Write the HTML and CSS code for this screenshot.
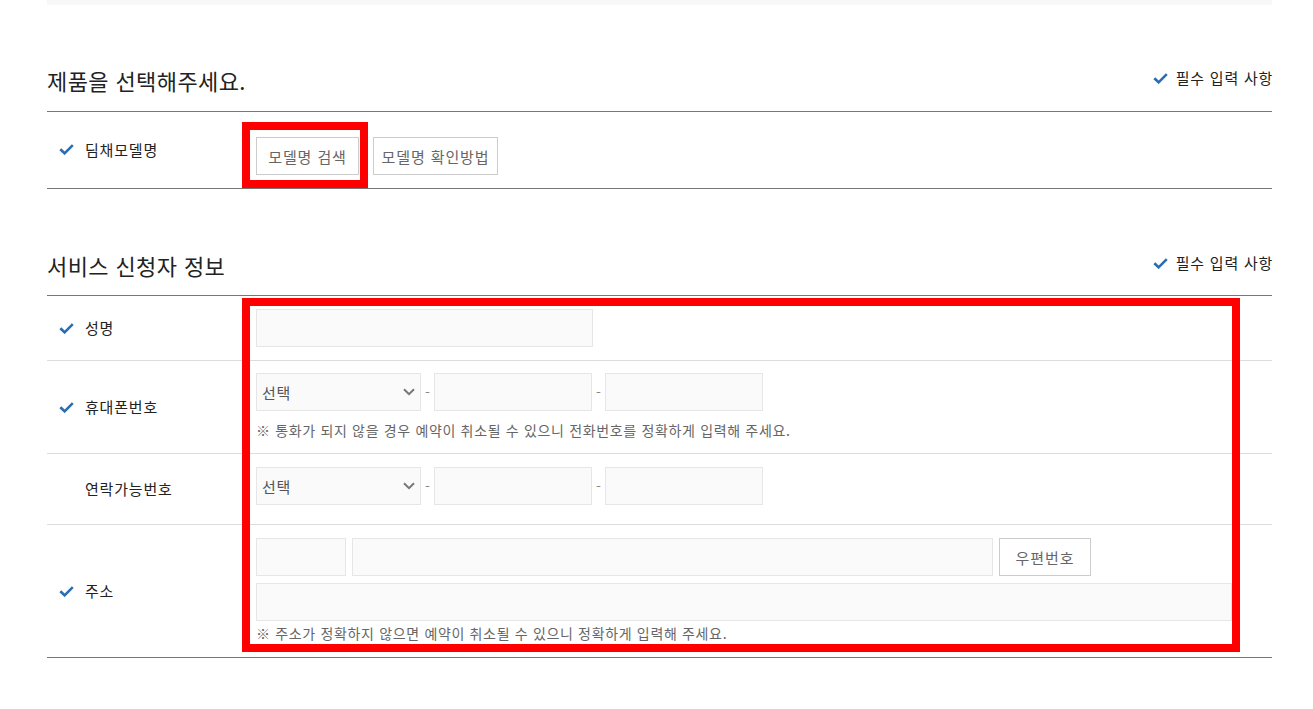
FILE: index.html
```html
<!DOCTYPE html>
<html lang="ko">
<head>
  <meta charset="UTF-8" />
  <meta name="viewport" content="width=device-width, initial-scale=1" />
  <title>서비스 신청</title>
  <link rel="stylesheet" href="styles.css">
</head>
<body>

  <div class="page">
    <div class="top-bar"></div>

    <!-- 제품 선택 -->
    <section class="form-section">
      <div class="section-head">
        <h2>제품을 선택해주세요.</h2>
        <span class="required-note">
          <svg class="check" viewBox="0 0 15 11"><path d="M1.3 5.2 L5.6 9.3 L13.8 1.2" /></svg>
          필수 입력 사항
        </span>
      </div>
      <div class="form-row row-model">
        <div class="row-label">
          <svg class="check" viewBox="0 0 15 11"><path d="M1.3 5.2 L5.6 9.3 L13.8 1.2" /></svg>
          딤채모델명
        </div>
        <div class="row-field field-inline">
          <button class="btn-line btn-search" type="button">모델명 검색</button>
          <button class="btn-line btn-guide" type="button">모델명 확인방법</button>
        </div>
      </div>
    </section>

    <!-- 서비스 신청자 정보 -->
    <section class="form-section">
      <div class="section-head">
        <h2>서비스 신청자 정보</h2>
        <span class="required-note">
          <svg class="check" viewBox="0 0 15 11"><path d="M1.3 5.2 L5.6 9.3 L13.8 1.2" /></svg>
          필수 입력 사항
        </span>
      </div>

      <div class="form-row row-name">
        <div class="row-label">
          <svg class="check" viewBox="0 0 15 11"><path d="M1.3 5.2 L5.6 9.3 L13.8 1.2" /></svg>
          성명
        </div>
        <div class="row-field">
          <input class="text-input w-name" type="text">
        </div>
      </div>

      <div class="form-row row-phone">
        <div class="row-label">
          <svg class="check" viewBox="0 0 15 11"><path d="M1.3 5.2 L5.6 9.3 L13.8 1.2" /></svg>
          휴대폰번호
        </div>
        <div class="row-field">
          <div class="phone-group">
            <div class="select-box">
              <select><option>선택</option></select>
              <svg class="chevron" viewBox="0 0 12 8"><path d="M1 1.2 L6 6.2 L11 1.2" /></svg>
            </div>
            <span class="dash">-</span>
            <input class="text-input w-phone" type="text">
            <span class="dash">-</span>
            <input class="text-input w-phone" type="text">
          </div>
          <p class="help">※ 통화가 되지 않을 경우 예약이 취소될 수 있으니 전화번호를 정확하게 입력해 주세요.</p>
        </div>
      </div>

      <div class="form-row row-contact">
        <div class="row-label no-check">연락가능번호</div>
        <div class="row-field">
          <div class="phone-group">
            <div class="select-box">
              <select><option>선택</option></select>
              <svg class="chevron" viewBox="0 0 12 8"><path d="M1 1.2 L6 6.2 L11 1.2" /></svg>
            </div>
            <span class="dash">-</span>
            <input class="text-input w-phone" type="text">
            <span class="dash">-</span>
            <input class="text-input w-phone" type="text">
          </div>
        </div>
      </div>

      <div class="form-row row-address">
        <div class="row-label">
          <svg class="check" viewBox="0 0 15 11"><path d="M1.3 5.2 L5.6 9.3 L13.8 1.2" /></svg>
          주소
        </div>
        <div class="row-field">
          <div class="address-line">
            <input class="text-input w-zip" type="text">
            <input class="text-input w-addr" type="text">
            <button class="btn-line btn-zip" type="button">우편번호</button>
          </div>
          <input class="text-input w-detail" type="text">
          <p class="help help-tight">※ 주소가 정확하지 않으면 예약이 취소될 수 있으니 정확하게 입력해 주세요.</p>
        </div>
      </div>
    </section>

    <!-- 강조 표시 -->
    <div class="mark mark-model"></div>
    <div class="mark mark-applicant"></div>
  </div>

</body>
</html>
```

FILE: styles.css
```css
body {
  margin: 0;
  padding: 0;
  background: #fff;
  color: #222;
  font-family: "Noto Sans CJK KR", "Noto Sans", sans-serif;
}

.page {
  position: relative;
  width: 1225px;
  margin-left: 47px;
}

.top-bar {
  height: 5px;
  background: #f8f8f8;
}

/* Section heading */
.form-section {
  margin-top: 60px;
}

.form-section + .form-section {
  margin-top: 61px;
}

.section-head {
  display: flex;
  justify-content: space-between;
  align-items: center;
  padding-bottom: 16px;
  border-bottom: 1px solid #777;
}

.form-section + .form-section .section-head {
  padding-bottom: 15px;
}

.section-head h2 {
  margin: 0;
  font-size: 22px;
  line-height: 30px;
  font-weight: 400;
  letter-spacing: 0.4px;
  color: #222;
}

.required-note {
  display: flex;
  align-items: center;
  gap: 8px;
  font-size: 15px;
  line-height: 20px;
  letter-spacing: 0.75px;
  color: #222;
  margin-top: -4px;
  margin-right: -1px;
}

.check {
  width: 15px;
  height: 11px;
  flex: none;
}

.check path {
  fill: none;
  stroke: #2a6db5;
  stroke-width: 2.6;
}

/* Rows */
.form-row {
  display: grid;
  grid-template-columns: 209px 1fr;
  border-bottom: 1px solid #ddd;
}

.form-section .form-row:last-child {
  border-bottom-color: #777;
}

.row-label {
  display: flex;
  align-items: center;
  gap: 11px;
  padding-left: 12px;
  font-size: 15px;
  line-height: 20px;
  letter-spacing: 0.8px;
  color: #222;
}

.row-label.no-check {
  padding-left: 38px;
}

.row-model .row-label {
  margin-top: -1px;
}

.row-model .row-field {
  padding: 25px 0 13px;
}

.row-name .row-field {
  padding: 13px 0 13px;
}

.row-phone .row-field {
  padding: 12px 0 13px;
}

.row-contact .row-field {
  padding: 13px 0 19px;
}

.row-address .row-field {
  padding: 13px 0 14px;
}

.field-inline {
  display: flex;
  gap: 14px;
}

/* Buttons */
.btn-line {
  height: 38px;
  padding: 0;
  border: 1px solid #ccc;
  background: #fff;
  color: #666;
  font-family: inherit;
  font-size: 15px;
  letter-spacing: 0.9px;
  cursor: pointer;
}

.btn-search { width: 103px; }
.btn-guide { width: 125px; }
.btn-zip { width: 92px; }

/* Inputs */
.text-input {
  display: block;
  box-sizing: border-box;
  height: 38px;
  margin: 0;
  border: 1px solid #e6e6e6;
  background: #fafafa;
  font-family: inherit;
  font-size: 15px;
}

.w-name { width: 337px; }
.w-phone { width: 158px; }
.w-zip { width: 90px; }
.w-addr { width: 641px; }
.w-detail { width: 976px; margin-top: 7px; }

.phone-group,
.address-line {
  display: flex;
  align-items: center;
}

.address-line {
  gap: 6px;
}

.dash {
  width: 13px;
  text-align: center;
  font-size: 14px;
  color: #888;
}

.select-box {
  position: relative;
  width: 165px;
  height: 38px;
}

.select-box select {
  width: 100%;
  height: 100%;
  box-sizing: border-box;
  padding: 0 0 0 5px;
  border: 1px solid #e6e6e6;
  background: #fafafa;
  color: #555;
  font-family: inherit;
  font-size: 15px;
  letter-spacing: 0.8px;
  appearance: none;
  -webkit-appearance: none;
}

.chevron {
  position: absolute;
  right: 6px;
  top: 15px;
  width: 12px;
  height: 8px;
  pointer-events: none;
}

.chevron path {
  fill: none;
  stroke: #777;
  stroke-width: 2;
}

.help {
  margin: 9px 0 0;
  font-size: 14px;
  line-height: 20px;
  letter-spacing: 0.66px;
  color: #666;
}

.help-tight {
  margin-top: 2px;
}

/* Red highlight boxes */
.mark {
  position: absolute;
  box-sizing: border-box;
  border: 8px solid #f00;
  pointer-events: none;
}

.mark-model {
  left: 195px;
  top: 122px;
  width: 126px;
  height: 66px;
}

.mark-applicant {
  left: 195px;
  top: 298px;
  width: 998px;
  height: 354px;
}
```
